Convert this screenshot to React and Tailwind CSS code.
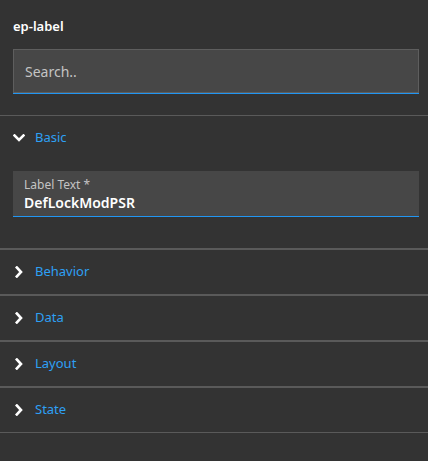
const sections = ['Behavior', 'Data', 'Layout', 'State'];

function ChevDown() {
  return (
    <svg width="12" height="8" viewBox="0 0 12 8" className="shrink-0">
      <polyline points="1.5,1.5 6,6 10.5,1.5" fill="none" stroke="white" strokeWidth="2.6" strokeLinecap="square" />
    </svg>
  );
}

function ChevRight() {
  return (
    <svg width="8" height="12" viewBox="0 0 8 12" className="shrink-0">
      <polyline points="1.8,1.5 6,6 1.8,10.5" fill="none" stroke="white" strokeWidth="2.6" strokeLinecap="square" />
    </svg>
  );
}

export default function App() {
  return (
    <div className="w-[428px] h-[461px] bg-[#333333] text-white font-['Noto_Sans',sans-serif] overflow-hidden">
      {/* Header & search */}
      <div className="h-[115px] pl-[13px] pr-[9px] pt-[16px]">
        <div className="text-[13px] font-semibold leading-[20px]">ep-label</div>
        <div className="mt-[13px] border-b border-[#2196f3]">
          <input
            type="text"
            placeholder="Search.."
            className="w-full h-[44px] bg-[#474747] border border-[#5e5e5e] px-[11px] text-[14px] text-white placeholder:text-[#c4c4c4] outline-none"
          />
        </div>
      </div>

      {/* Basic (expanded) */}
      <div className="h-[134px] border-t border-b border-[#5a5a5a]">
        <div className="h-[44px] flex items-center pl-[13px] gap-[10px]">
          <ChevDown />
          <span className="text-[13px] text-[#2ea0f5]">Basic</span>
        </div>
        <div className="pl-[13px] pr-[9px] pt-[11px]">
          <div className="bg-[#474747] border-b border-[#2196f3] px-[11px] pt-[6px] pb-[3px]">
            <div className="text-[12px] text-[#c4c4c4] leading-[16px]">Label Text *</div>
            <div className="text-[14px] font-semibold leading-[20px]">DefLockModPSR</div>
          </div>
        </div>
      </div>

      {/* Collapsed sections */}
      {sections.map((name) => (
        <div key={name} className="border-t border-b border-[#5a5a5a] h-[46px] flex items-center pl-[15px] gap-[12px]">
          <ChevRight />
          <span className="text-[13px] text-[#2ea0f5]">{name}</span>
        </div>
      ))}
    </div>
  );
}
